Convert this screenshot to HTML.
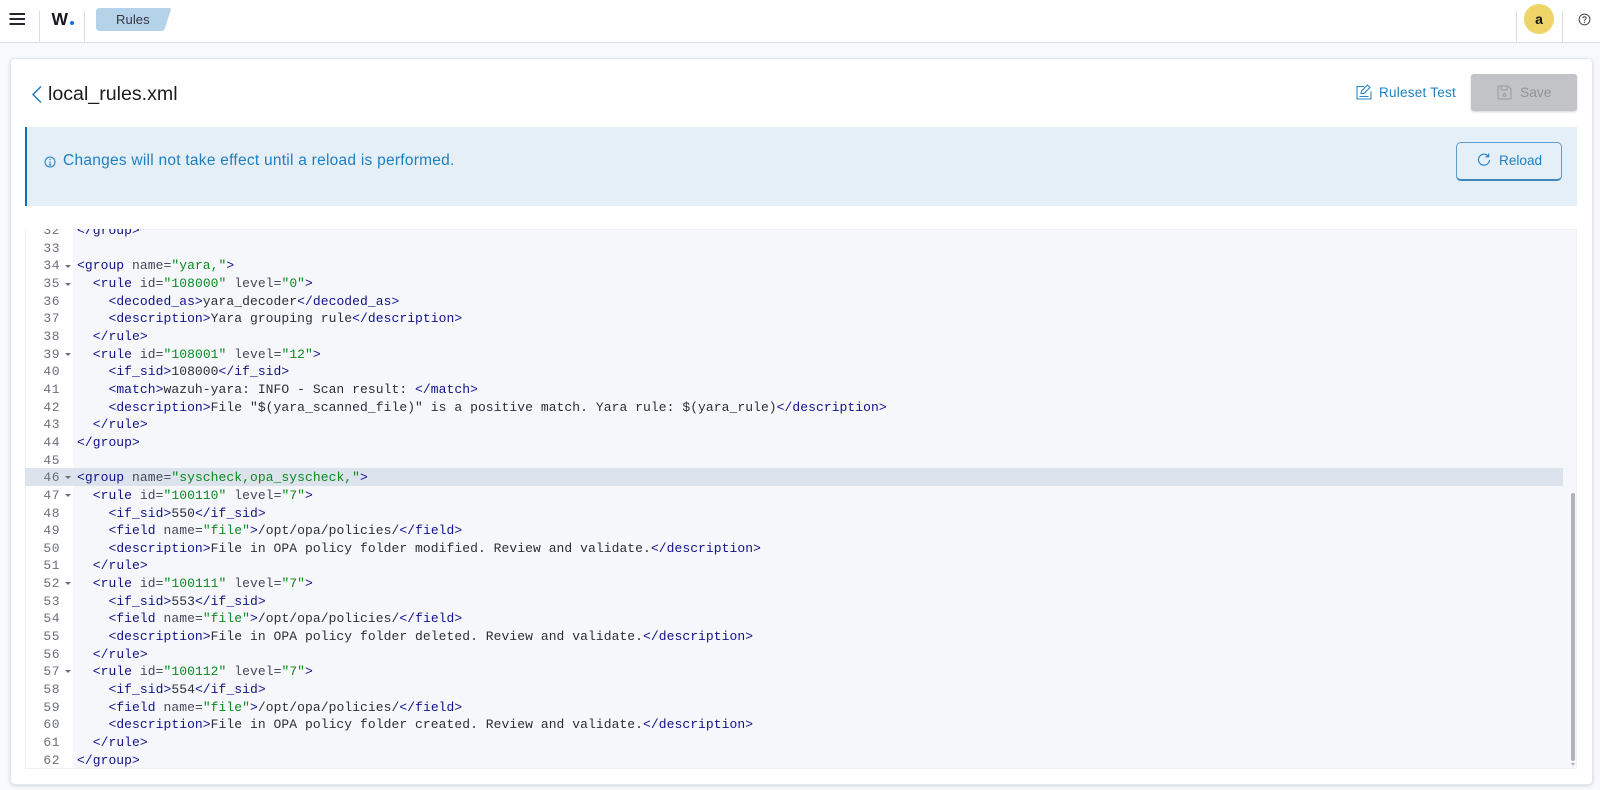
<!DOCTYPE html>
<html><head><meta charset="utf-8">
<style>
html,body{margin:0;padding:0;width:1600px;height:790px;overflow:hidden;background:#f8f9fb;font-family:"Liberation Sans",sans-serif}
.a{position:absolute}
#hdr{left:0;top:0;width:1600px;height:42px;background:#fff;border-bottom:1px solid #d9dde9}
.sep{top:11px;width:1px;height:31px;background:#d9dde9}
#card{left:10px;top:58px;width:1581px;height:725px;background:#fff;border:1px solid #e3e7ef;border-radius:5px;box-shadow:0 1px 3px rgba(100,110,140,.25)}
#callout{left:25px;top:127px;width:1550px;height:79px;background:#e5eff8;border-left:2px solid #0071c2}
#ed{left:25px;top:229px;width:1552px;height:540px;background:#f5f7fb;overflow:hidden;box-shadow:inset 0 0 0 1px #eef0f5}
#gut{left:1px;top:0;width:47px;height:539px;background:#fff}
#act{left:0;top:239px;width:1538px;height:18px;background:#dce3ec}
pre{margin:0;font-family:"Liberation Mono",monospace;font-size:13px;line-height:17.65px;letter-spacing:.06px}
#code{left:52px;top:-7px;color:#2d2d3a}
#nums{left:0;top:-7px;width:35px;text-align:right;color:#6a6f7a;letter-spacing:.5px}
i{font-style:normal;color:#12128a}
b{font-weight:normal;color:#0a8a1e}
u{text-decoration:none;color:#45485a}
.f{left:40px;width:0;height:0;border-left:3px solid transparent;border-right:3px solid transparent;border-top:3px solid #6a6f7a}
</style></head>
<body>
<div id="hdr" class="a"></div>
<svg class="a" style="left:9px;top:12px" width="17" height="14" viewBox="0 0 17 14"><path d="M0.5 2H16M0.5 7H16M0.5 12H16" stroke="#25262e" stroke-width="2" fill="none"/></svg>
<div class="a sep" style="left:39px"></div>
<div class="a" style="left:51.500px;top:6px;font-size:17.500px;font-weight:bold;color:#17181f;line-height:26px">W</div>
<div class="a" style="left:69.500px;top:21px;width:4px;height:4px;border-radius:50%;background:#1573e6"></div>
<div class="a sep" style="left:84px"></div>
<svg class="a" style="left:96px;top:8px" width="76" height="23" viewBox="0 0 76 23"><path d="M4 0H73Q75.500 0 74.700 2.500L69 20Q68 23 65 23H4Q0 23 0 19V4Q0 0 4 0Z" fill="#b4d2e8"/></svg>
<div class="a" style="left:116px;top:11px;font-size:13px;line-height:17px;letter-spacing:.1px;color:#343741">Rules</div>
<div class="a sep" style="left:1516px"></div>
<div class="a sep" style="left:1562px"></div>
<div class="a" style="left:1524px;top:4px;width:30px;height:30px;border-radius:50%;background:#efd568;text-align:center;font-size:14px;font-weight:bold;line-height:30px;color:#111">a</div>
<svg class="a" style="left:1578px;top:13px" width="13" height="13" viewBox="0 0 13 13"><circle cx="6.500" cy="6.500" r="5.400" fill="none" stroke="#444" stroke-width="1"/><path d="M4.800 5.100C4.900 3.200 8.200 3.300 8.200 5.100C8.200 6.300 6.500 6.300 6.500 7.700" fill="none" stroke="#444"/><circle cx="6.500" cy="9.400" r=".7" fill="#444"/></svg>

<div id="card" class="a"></div>
<svg class="a" style="left:31px;top:85px" width="12" height="19" viewBox="0 0 12 19"><path d="M10 1.500L2 9.500L10 17.500" fill="none" stroke="#1a76b8" stroke-width="1.400"/></svg>
<div class="a" style="left:48px;top:80px;font-size:19.600px;line-height:28px;color:#1a1c21">local_rules.xml</div>

<svg class="a" style="left:1356px;top:84px" width="16" height="16" viewBox="0 0 16 16"><path d="M8 2.500H1V15H15V7.500M3.500 12.500H12.500M5 9.500L5.500 7L11.500 1L14 3.500L8 9.500Z" fill="none" stroke="#2a86c6" stroke-width="1.100"/></svg>
<div class="a" style="left:1379px;top:84px;font-size:13.500px;line-height:18px;letter-spacing:.25px;color:#1f7fc0">Ruleset Test</div>
<div class="a" style="left:1471px;top:74px;width:105.500px;height:37px;background:#c2c3c6;border-radius:3px;box-shadow:0 1px 2px rgba(100,110,140,.3)"></div>
<svg class="a" style="left:1497px;top:85px" width="15" height="15" viewBox="0 0 15 15"><path d="M2 1H11L14 4V13Q14 14 13 14H2Q1 14 1 13V2Q1 1 2 1ZM4 1V5H10V1" fill="none" stroke="#97989c" stroke-width="1"/><circle cx="7.500" cy="10" r="1.400" fill="none" stroke="#97989c"/></svg>
<div class="a" style="left:1520px;top:84px;font-size:13.800px;line-height:18px;color:#929397">Save</div>

<div id="callout" class="a"></div>
<svg class="a" style="left:44px;top:156px" width="12" height="12" viewBox="0 0 12 12"><circle cx="6" cy="6" r="5" fill="none" stroke="#1f7fc0"/><path d="M6 5.200V9M4.800 9H7.200" stroke="#1f7fc0" fill="none"/><circle cx="6" cy="3.500" r=".7" fill="#1f7fc0"/></svg>
<div class="a" style="left:63px;top:151px;font-size:15.500px;line-height:20px;letter-spacing:.255px;color:#1f7fc0;white-space:nowrap">Changes will not take effect until a reload is performed.</div>
<div class="a" style="left:1456px;top:142px;width:104px;height:36px;border:1px solid #5f9ccb;border-bottom:2px solid #3f86bd;border-radius:5px"></div>
<svg class="a" style="left:1477px;top:153px" width="14" height="14" viewBox="0 0 14 14"><path d="M11.500 3.500A5.500 5.500 0 1 0 12.500 7M11.700 0.500V3.800H8.500" fill="none" stroke="#1f7fc0" stroke-width="1.100"/></svg>
<div class="a" style="left:1499px;top:152px;font-size:13.600px;line-height:18px;color:#1f7fc0">Reload</div>

<div id="ed" class="a">
<div id="gut" class="a"></div>
<div id="act" class="a"></div>
<pre id="nums" class="a">32
33
34
35
36
37
38
39
40
41
42
43
44
45
46
47
48
49
50
51
52
53
54
55
56
57
58
59
60
61
62</pre>
<div class="a f" style="top:36px"></div>
<div class="a f" style="top:54px"></div>
<div class="a f" style="top:124px"></div>
<div class="a f" style="top:247px"></div>
<div class="a f" style="top:265px"></div>
<div class="a f" style="top:353px"></div>
<div class="a f" style="top:441px"></div>
<pre id="code" class="a"><i>&lt;/group&gt;</i>

<i>&lt;group</i> <u>name=</u><b>"yara,"</b><i>&gt;</i>
  <i>&lt;rule</i> <u>id=</u><b>"108000"</b> <u>level=</u><b>"0"</b><i>&gt;</i>
    <i>&lt;decoded_as&gt;</i>yara_decoder<i>&lt;/decoded_as&gt;</i>
    <i>&lt;description&gt;</i>Yara grouping rule<i>&lt;/description&gt;</i>
  <i>&lt;/rule&gt;</i>
  <i>&lt;rule</i> <u>id=</u><b>"108001"</b> <u>level=</u><b>"12"</b><i>&gt;</i>
    <i>&lt;if_sid&gt;</i>108000<i>&lt;/if_sid&gt;</i>
    <i>&lt;match&gt;</i>wazuh-yara: INFO - Scan result: <i>&lt;/match&gt;</i>
    <i>&lt;description&gt;</i>File "$(yara_scanned_file)" is a positive match. Yara rule: $(yara_rule)<i>&lt;/description&gt;</i>
  <i>&lt;/rule&gt;</i>
<i>&lt;/group&gt;</i>

<i>&lt;group</i> <u>name=</u><b>"syscheck,opa_syscheck,"</b><i>&gt;</i>
  <i>&lt;rule</i> <u>id=</u><b>"100110"</b> <u>level=</u><b>"7"</b><i>&gt;</i>
    <i>&lt;if_sid&gt;</i>550<i>&lt;/if_sid&gt;</i>
    <i>&lt;field</i> <u>name=</u><b>"file"</b><i>&gt;</i>/opt/opa/policies/<i>&lt;/field&gt;</i>
    <i>&lt;description&gt;</i>File in OPA policy folder modified. Review and validate.<i>&lt;/description&gt;</i>
  <i>&lt;/rule&gt;</i>
  <i>&lt;rule</i> <u>id=</u><b>"100111"</b> <u>level=</u><b>"7"</b><i>&gt;</i>
    <i>&lt;if_sid&gt;</i>553<i>&lt;/if_sid&gt;</i>
    <i>&lt;field</i> <u>name=</u><b>"file"</b><i>&gt;</i>/opt/opa/policies/<i>&lt;/field&gt;</i>
    <i>&lt;description&gt;</i>File in OPA policy folder deleted. Review and validate.<i>&lt;/description&gt;</i>
  <i>&lt;/rule&gt;</i>
  <i>&lt;rule</i> <u>id=</u><b>"100112"</b> <u>level=</u><b>"7"</b><i>&gt;</i>
    <i>&lt;if_sid&gt;</i>554<i>&lt;/if_sid&gt;</i>
    <i>&lt;field</i> <u>name=</u><b>"file"</b><i>&gt;</i>/opt/opa/policies/<i>&lt;/field&gt;</i>
    <i>&lt;description&gt;</i>File in OPA policy folder created. Review and validate.<i>&lt;/description&gt;</i>
  <i>&lt;/rule&gt;</i>
<i>&lt;/group&gt;</i></pre>
<div class="a" style="left:1546px;top:264px;width:4px;height:268px;border-radius:2px;background:#aeb2bd"></div>
<div class="a" style="left:1546px;top:534px;width:0;height:0;border-left:2px solid transparent;border-right:2px solid transparent;border-top:3px solid #aeb2bd"></div>
</div>
</body></html>
